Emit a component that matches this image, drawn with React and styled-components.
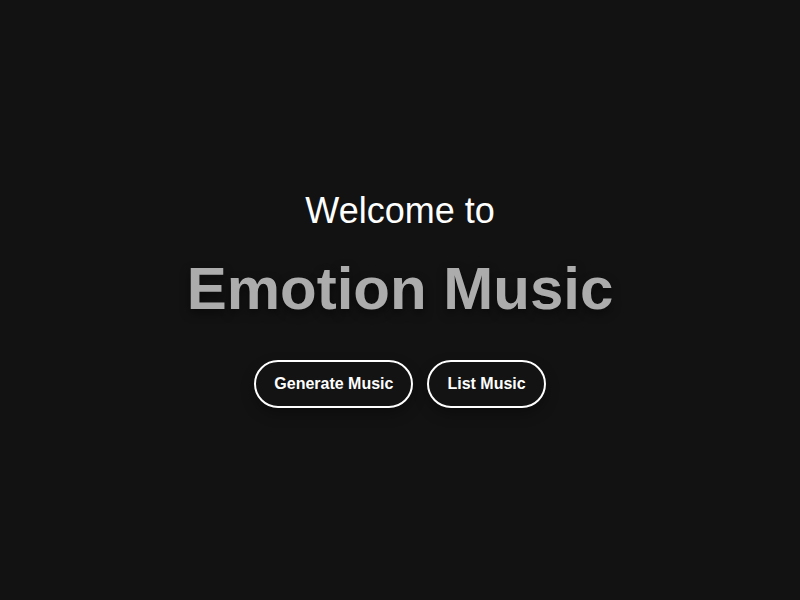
import React from 'react';
import styled, { createGlobalStyle } from 'styled-components';

const GlobalStyle = createGlobalStyle`
  html, body {
    margin: 0;
    padding: 0;
    background: #121212;
  }
  body {
    font-family: "Liberation Sans", Arial, sans-serif;
  }
`;

const Page = styled.div`
  min-height: 100vh;
  box-sizing: border-box;
  padding-bottom: 3px;
  display: flex;
  flex-direction: column;
  align-items: center;
  justify-content: center;
  background: #121212;
  color: #fff;
`;

const Greeting = styled.h2`
  margin: 0;
  font-size: 36px;
  font-weight: 400;
  line-height: 1.2;
  color: #fff;
`;

const Title = styled.h1`
  margin: 20px 0 0;
  font-size: 60px;
  font-weight: 700;
  line-height: 1.2;
  color: #acacac;
  text-shadow: 0 4px 10px rgba(0, 0, 0, 0.5);
`;

const Actions = styled.div`
  display: flex;
  gap: 14px;
  margin-top: 35px;
`;

const PillButton = styled.button`
  font-family: "Liberation Sans", Arial, sans-serif;
  font-size: 16px;
  font-weight: 700;
  color: #fff;
  background: rgba(20, 20, 20, 0.9);
  border: 2px solid #fff;
  border-radius: 24px;
  height: 48px;
  padding: 0 18px;
  cursor: pointer;
  box-shadow: 0 6px 14px rgba(0, 0, 0, 0.3);
`;

export default function App() {
  return (
    <>
      <GlobalStyle />
      <Page>
        <Greeting>Welcome to</Greeting>
        <Title>Emotion Music</Title>
        <Actions>
          <PillButton>Generate Music</PillButton>
          <PillButton>List Music</PillButton>
        </Actions>
      </Page>
    </>
  );
}
